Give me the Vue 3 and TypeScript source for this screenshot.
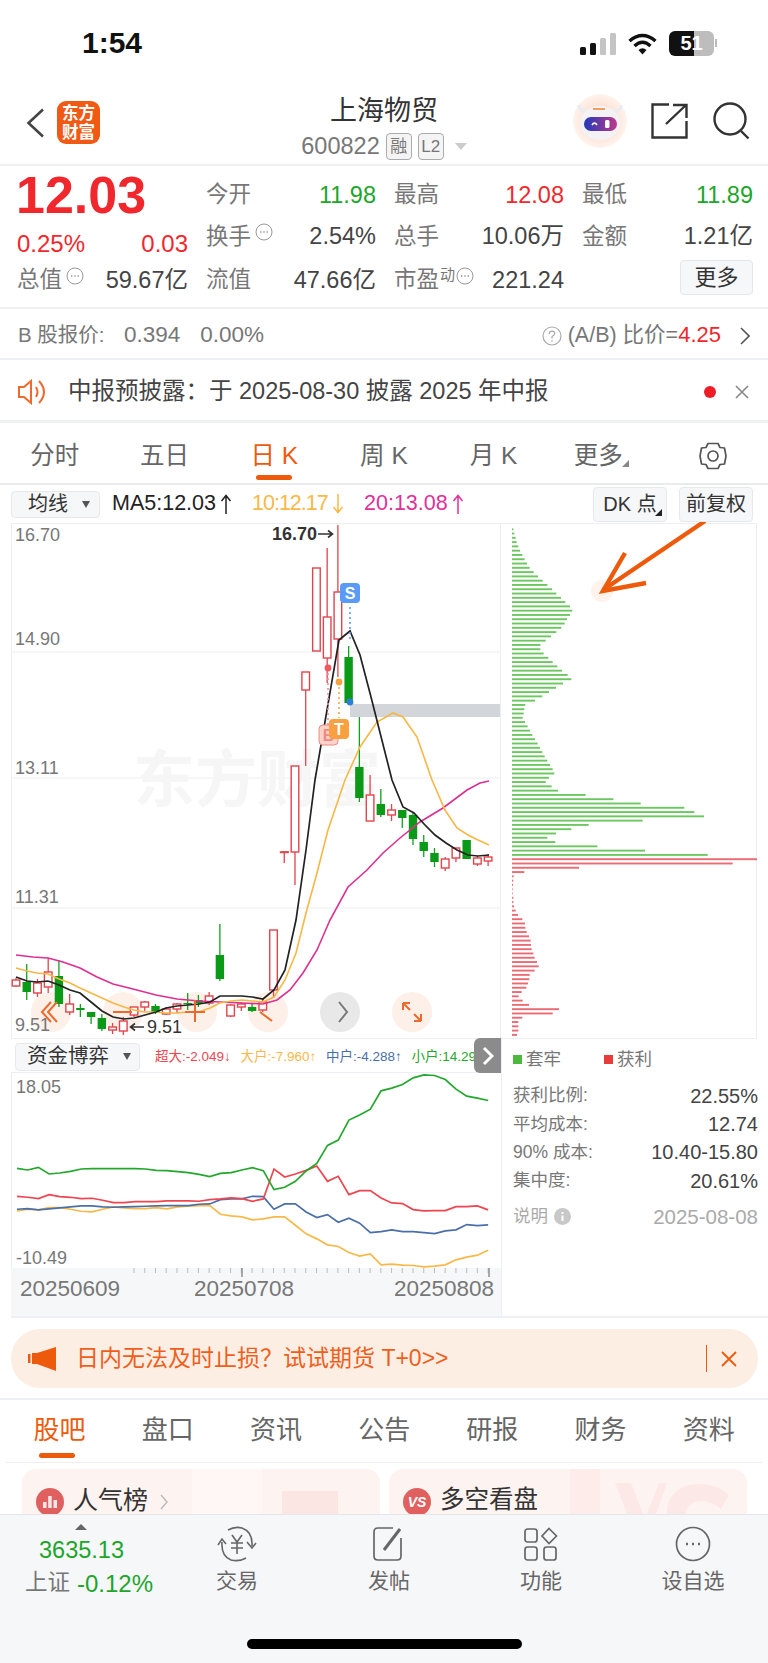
<script setup lang="ts">
interface Cell {
  label: string
  value: string
  color?: string
  info?: boolean
  sup?: string
}

const quoteRows: Cell[][] = [
  [
    { label: "今开", value: "11.98", color: "green" },
    { label: "最高", value: "12.08", color: "red" },
    { label: "最低", value: "11.89", color: "green" },
  ],
  [
    { label: "换手", value: "2.54%", info: true },
    { label: "总手", value: "10.06万" },
    { label: "金额", value: "1.21亿" },
  ],
]

const periodTabs = ["分时", "五日", "日 K", "周 K", "月 K"]
const infoTabs = ["股吧", "盘口", "资讯", "公告", "研报", "财务", "资料"]

// top, bottom, wick top, wick bottom, 1 = up (hollow red)
const candles: number[][] = [
  [980, 986, 978, 987, 1], [982, 992, 964, 1000, 0], [983, 993, 979, 997, 1], [972, 987, 958, 993, 1],
  [976, 1004, 960, 1007, 0], [1004, 1012, 994, 1015, 1], [1008, 1010, 1004, 1017, 0], [1012, 1017, 1012, 1024, 0],
  [1018, 1029, 1014, 1031, 0], [1027, 1030, 1023, 1034, 1], [1021, 1031, 1017, 1035, 1], [1007, 1015, 1007, 1017, 1],
  [1002, 1007, 1001, 1011, 1], [1006, 1012, 1004, 1014, 0], [1009, 1014, 1007, 1015, 1], [1004, 1009, 1003, 1013, 1],
  [1003, 1004, 993, 1010, 0], [1000, 1003, 995, 1007, 0], [996, 1003, 992, 1005, 1], [955, 979, 924, 981, 0],
  [1005, 1016, 1004, 1017, 1], [1004, 1007, 1002, 1011, 1], [1007, 1011, 1004, 1012, 0], [1002, 1010, 998, 1012, 1],
  [930, 990, 930, 998, 1], [852, 852.5, 852, 863, 1], [766, 852, 766, 885, 1], [672, 690, 672, 766, 1],
  [568, 651, 568, 651, 1], [617, 658, 548, 683, 1], [592, 639, 525, 677, 1], [657, 703, 646, 703, 0],
  [767, 798, 717, 802, 0], [795, 821, 775, 821, 1], [804, 815, 789, 817, 0], [810, 815, 804, 821, 1],
  [810, 818, 810, 828, 0], [815, 839, 812, 845, 0], [842, 851, 835, 857, 0], [853, 862, 848, 867, 0],
  [859, 868, 857, 871, 1], [848, 858, 848, 862, 1], [840, 859, 840, 859, 0], [858, 864, 856, 866, 1],
  [857, 861, 854, 866, 1],
]

const candleX = (i: number) => 16 + i * 10.73

const ma5 = "16,977 27,981 37,982 48,981 59,985 70,990 80,993 91,1002 102,1011 113,1017 124,1019 134,1018 145,1015 156,1012 166,1008 177,1006 188,1005 199,1004 210,1002 220,996 231,996 242,996 252,997 263,999 274,990 285,970 296,920 306,850 315,780 339,640 350,631 360,655 371,697 392,780 403,807 414,813 425,825 435,835 446,843 457,850 468,855 478,856 489,855"
const ma10 = "16,968 27,971 37,973 48,974 59,979 70,983 80,988 91,993 102,998 113,1003 124,1007 134,1010 145,1012 156,1012 166,1013 177,1013 188,1012 199,1012 210,1008 220,1003 231,1001 242,1000 252,1001 263,1002 274,997 285,980 296,953 306,913 317,873 328,830 345,780 360,747 377,722 393,713 403,717 417,737 432,780 445,810 457,828 468,835 478,840 489,845"
const ma20 = "16,955 33,957 48,958 63,962 80,968 97,977 113,984 133,989 156,995 177,999 199,1001 220,1002 242,1003 263,1004 277,1000 290,990 303,973 317,950 330,920 348,887 367,870 383,853 400,838 420,822 443,808 467,790 480,783 489,781"

// widths measured at 3x
const chipGreen = [4, 7, 11, 14, 19, 24, 31, 38, 45, 53, 65, 78, 92, 106, 120, 133, 147, 160, 174, 181, 174, 165, 158, 148, 133, 117, 101, 85, 85, 95, 109, 122, 136, 150, 167, 178, 153, 132, 111, 91, 69, 40, 37, 35, 32, 39, 47, 54, 61, 69, 77, 84, 91, 98, 106, 114, 122, 127, 111, 101, 119, 138, 221, 304, 386, 517, 547, 576, 392, 230, 178, 132, 106, 130, 256, 399, 587]
const chipRed = [735, 662, 201, 37, 5, 4, 3, 2, 2, 4, 4, 6, 11, 18, 31, 39, 40, 44, 51, 56, 57, 59, 64, 68, 75, 80, 68, 53, 52, 48, 43, 29, 20, 32, 51, 141, 122, 31, 19, 19, 19, 15]

const chipY = (i: number) => 528.3 + i * 4.285

// y values measured at 3x from y=1040
const flowLines: { color: string; ys: number[] }[] = [
  { color: "#f9b848", ys: [513, 508, 510, 503, 503, 508, 514, 516, 508, 501, 504, 506, 506, 503, 507, 501, 499, 497, 497, 523, 528, 531, 540, 537, 531, 531, 556, 582, 597, 615, 620, 638, 649, 642, 675, 673, 676, 677, 681, 679, 675, 660, 652, 646, 631] },
  { color: "#4a6fa8", ys: [508, 506, 510, 507, 504, 501, 498, 498, 501, 502, 501, 500, 499, 498, 497, 497, 497, 493, 492, 479, 477, 477, 469, 470, 508, 492, 492, 516, 533, 524, 547, 535, 550, 578, 575, 570, 575, 575, 578, 581, 573, 570, 554, 557, 555] },
  { color: "#ee4550", ys: [469, 472, 476, 464, 470, 472, 476, 475, 481, 488, 488, 485, 485, 485, 483, 483, 483, 484, 479, 477, 474, 476, 484, 477, 387, 411, 402, 391, 378, 424, 409, 464, 452, 452, 474, 489, 491, 509, 513, 512, 512, 500, 500, 498, 510] },
  { color: "#22a82c", ys: [385, 390, 382, 402, 399, 394, 387, 386, 386, 386, 386, 386, 387, 391, 392, 395, 398, 403, 410, 400, 398, 390, 383, 392, 449, 442, 424, 393, 370, 316, 300, 240, 225, 207, 152, 144, 133, 113, 104, 106, 118, 147, 168, 174, 181] },
]

function flowPoints(ys: number[]) {
  return ys.map((y, i) => `${candleX(i)},${1040 + y / 3}`).join(" ")
}

const ticks = Array.from({ length: 34 }, (_, i) => candleX(i + 11))

const stats = [
  { label: "获利比例:", value: "22.55%" },
  { label: "平均成本:", value: "12.74" },
  { label: "90% 成本:", value: "10.40-15.80" },
  { label: "集中度:", value: "20.61%" },
]
</script>

<template>
  <div class="page">
    <div class="status">
      <span class="time">1:54</span>
      <div class="status-icons">
        <svg width="36" height="22" viewBox="0 0 36 22">
          <rect x="0" y="14" width="6" height="8" rx="1.5" fill="#111" />
          <rect x="10" y="10" width="6" height="12" rx="1.5" fill="#111" />
          <rect x="20" y="5" width="6" height="17" rx="1.5" fill="#c4c4c4" />
          <rect x="30" y="0" width="6" height="22" rx="1.5" fill="#c4c4c4" />
        </svg>
        <svg width="29" height="22" viewBox="0 0 29 22" fill="none" stroke="#111" stroke-width="3.4">
          <path d="M1.5 8 Q14.5 -3 27.5 8" />
          <path d="M6.5 13 Q14.5 5.5 22.5 13" />
          <path d="M14.5 21.5 L10.5 17 Q14.5 13.5 18.5 17 Z" fill="#111" stroke="none" />
        </svg>
        <div class="battery"><span>51</span></div>
        <i class="battery-nub"></i>
      </div>
    </div>

    <div class="nav">
      <div class="nav-left">
        <svg width="19" height="30" viewBox="0 0 19 30" fill="none" stroke="#444" stroke-width="2.6"><path d="M17 1.5 L2.5 15 L17 28.5" /></svg>
        <div class="logo">东方<br />财富</div>
      </div>
      <div class="nav-center">
        <div class="stock-name">上海物贸</div>
        <div class="stock-code">
          <span>600822</span><b class="code-tag">融</b><b class="code-tag">L2</b><i class="code-arrow"></i>
        </div>
      </div>
      <div class="nav-right">
        <svg width="54" height="54" viewBox="0 0 54 54">
          <defs>
            <linearGradient id="visor" x1="0" x2="1" y1="0" y2="0">
              <stop offset="0" stop-color="#2238b8" />
              <stop offset="1" stop-color="#c0398c" />
            </linearGradient>
            <radialGradient id="halo">
              <stop offset="0.6" stop-color="#fde4d8" />
              <stop offset="1" stop-color="#fef4ee" />
            </radialGradient>
          </defs>
          <circle cx="27" cy="27" r="27" fill="url(#halo)" />
          <path d="M6 11 Q7 17 13 18 M48 11 Q47 17 41 18" fill="none" stroke="#ececf0" stroke-width="4" />
          <ellipse cx="27" cy="29" rx="20" ry="17" fill="#f3f3f6" />
          <rect x="20" y="14" width="12" height="2" fill="#f0a060" />
          <rect x="11" y="23" width="33" height="14" rx="7" fill="url(#visor)" />
          <path d="M19 31 Q21.5 27 24 31" fill="none" stroke="#fff" stroke-width="1.6" />
          <rect x="32" y="26" width="4.5" height="8" rx="1.5" fill="#fff" />
        </svg>
        <svg class="share" width="37" height="36" viewBox="0 0 37 36" fill="none" stroke="#333" stroke-width="2.4">
          <path d="M18 1.5 H1.5 V34.5 H35.5 V18" />
          <path d="M15 21 L34 3 M22 2 H35.5 V15" />
        </svg>
        <svg class="search" width="37" height="38" viewBox="0 0 37 38" fill="none" stroke="#333" stroke-width="2.4">
          <circle cx="17" cy="17" r="15.5" />
          <path d="M28 29 L35.5 36.5" />
        </svg>
      </div>
    </div>

    <div class="quote">
      <div class="price">12.03</div>
      <template v-for="(cell, c) in quoteRows[0]" :key="c">
        <div class="cell row-one">
          <span class="cell-label">{{ cell.label }}</span>
          <span :class="['cell-value', cell.color]">{{ cell.value }}</span>
        </div>
      </template>

      <div class="change"><span>0.25%</span><span>0.03</span></div>
      <template v-for="(cell, c) in quoteRows[1]" :key="c">
        <div class="cell">
          <span class="cell-label">{{ cell.label }}
            <svg v-if="cell.info" class="dots" width="18" height="18" viewBox="0 0 18 18" fill="none" stroke="#999"><circle cx="9" cy="9" r="8" /><path d="M5 9h1.4M8.3 9h1.4M11.6 9H13" stroke-width="1.4" /></svg>
          </span>
          <span class="cell-value">{{ cell.value }}</span>
        </div>
      </template>

      <div class="cell">
        <span class="cell-label">总值
          <svg class="dots" width="18" height="18" viewBox="0 0 18 18" fill="none" stroke="#999"><circle cx="9" cy="9" r="8" /><path d="M5 9h1.4M8.3 9h1.4M11.6 9H13" stroke-width="1.4" /></svg>
        </span>
        <span class="cell-value">59.67亿</span>
      </div>
      <div class="cell">
        <span class="cell-label">流值</span>
        <span class="cell-value">47.66亿</span>
      </div>
      <div class="cell">
        <span class="cell-label">市盈<sup class="sup">动</sup>
          <svg class="dots near" width="18" height="18" viewBox="0 0 18 18" fill="none" stroke="#999"><circle cx="9" cy="9" r="8" /><path d="M5 9h1.4M8.3 9h1.4M11.6 9H13" stroke-width="1.4" /></svg>
        </span>
        <span class="cell-value">221.24</span>
      </div>
      <div class="more-cell"><button class="more-btn">更多</button></div>
    </div>

    <div class="b-row">
      <span class="b-label">B 股报价:</span>
      <span class="b-num">0.394</span>
      <span class="b-num">0.00%</span>
      <div class="b-right">
        <svg width="20" height="20" viewBox="0 0 20 20" fill="none" stroke="#aaa" stroke-width="1.2"><circle cx="10" cy="10" r="9" /><path d="M7.2 8 Q7.4 5.2 10 5.2 Q12.8 5.2 12.8 7.6 Q12.8 9.2 10 10.6 V12.4" /><path d="M10 14v1.4" /></svg>
        <span>(A/B) 比价=<em>4.25</em></span>
        <svg class="b-chevron" width="10" height="18" viewBox="0 0 10 18" fill="none" stroke="#555" stroke-width="1.6"><path d="M1 1 L9 9 L1 17" /></svg>
      </div>
    </div>

    <div class="notice">
      <svg width="30" height="26" viewBox="0 0 30 26" fill="none" stroke="#ee6a2c" stroke-width="2">
        <path d="M1 8 H6 L13 2 V24 L6 18 H1 Z" />
        <path d="M18 8 Q21 13 18 18" />
        <path d="M21 2 Q31 13 21 24" />
      </svg>
      <span class="notice-text">中报预披露：于 2025-08-30 披露 2025 年中报</span>
      <i class="notice-dot"></i>
      <svg width="14" height="14" viewBox="0 0 14 14" stroke="#888" stroke-width="1.6"><path d="M1 1 L13 13 M13 1 L1 13" /></svg>
    </div>

    <div class="period-tabs">
      <div v-for="(t, i) in periodTabs" :key="t" :class="['period-tab', { on: i === 2 }]">{{ t }}</div>
      <div class="period-tab tab-more">更多<i class="corner"></i></div>
      <div class="period-tab">
        <svg width="28" height="30" viewBox="0 0 28 30" fill="none" stroke="#555" stroke-width="1.7">
          <path d="M9 2.5 H19 L21 6.5 L25.5 7 L27 15 L25.5 23 L21 23.5 L19 27.5 H9 L7 23.5 L2.5 23 L1 15 L2.5 7 L7 6.5 Z" stroke-linejoin="round" />
          <circle cx="14" cy="15" r="5" />
        </svg>
      </div>
    </div>

    <div class="ma-row">
      <div class="select ma-select"><span>均线</span><i class="select-arrow"></i></div>
      <span class="ma-item ma5">MA5:12.03
        <svg width="12" height="20" viewBox="0 0 12 20" fill="none" stroke="currentColor" stroke-width="1.5"><path d="M6 20V1.5M1.5 7 L6 1.5 L10.5 7" /></svg>
      </span>
      <span class="ma-item ma10"><span class="tight">10:12.17</span>
        <svg width="12" height="20" viewBox="0 0 12 20" fill="none" stroke="currentColor" stroke-width="1.5"><path d="M6 0V18.5M1.5 13 L6 18.5 L10.5 13" /></svg>
      </span>
      <span class="ma-item ma20">20:13.08
        <svg width="12" height="20" viewBox="0 0 12 20" fill="none" stroke="currentColor" stroke-width="1.5"><path d="M6 20V1.5M1.5 7 L6 1.5 L10.5 7" /></svg>
      </span>
      <div class="ma-btn dk">DK 点<i class="corner dark"></i></div>
      <div class="ma-btn fq">前复权</div>
    </div>

    <div class="chart-row">
      <svg class="kline" width="490" height="516" viewBox="11 523 490 516">
        <line x1="11" x2="501" y1="652" y2="652" stroke="#eceef3" />
        <line x1="11" x2="501" y1="778" y2="778" stroke="#eceef3" />
        <line x1="11" x2="501" y1="908" y2="908" stroke="#eceef3" />
        <text x="133" y="802" class="watermark">东方财富</text>
        <rect x="350" y="704" width="151" height="13" fill="#d2d5d9" />

        <g v-for="r in [51, 123, 197, 268, 412]" :key="r">
          <circle :cx="r" cy="1012" r="20" fill="#fdf0e8" />
        </g>
        <circle cx="340" cy="1012" r="20" fill="#e8e8e8" />

        <text x="15" y="541" class="axis">16.70</text>
        <text x="15" y="645" class="axis">14.90</text>
        <text x="15" y="774" class="axis">13.11</text>
        <text x="15" y="903" class="axis">11.31</text>
        <text x="15" y="1031" class="axis">9.51</text>

        <g v-for="(c, i) in candles" :key="i">
          <line :x1="candleX(i)" :x2="candleX(i)" :y1="c[2]" :y2="c[3]" :stroke="c[4] ? '#e2444c' : '#12a01f'" stroke-width="1.3" />
          <rect v-if="c[4]" :x="candleX(i) - 3.8" :y="c[0]" width="7.6" :height="Math.max(c[1] - c[0], 0.5)" fill="#fff" stroke="#e2444c" stroke-width="1.4" />
          <rect v-else :x="candleX(i) - 4.2" :y="c[0]" width="8.4" :height="c[1] - c[0]" fill="#0a9a17" />
        </g>
        <line x1="281" x2="289" y1="852" y2="852" stroke="#e2444c" stroke-width="1.5" />

        <polyline :points="ma20" fill="none" stroke="#dd2f92" stroke-width="1.6" />
        <polyline :points="ma10" fill="none" stroke="#f8b745" stroke-width="1.6" />
        <polyline :points="ma5" fill="none" stroke="#222" stroke-width="1.7" />

        <!-- buy / sell marks -->
        <line x1="350" x2="350" y1="607" y2="640" stroke="#5b9bf8" stroke-width="1.6" stroke-dasharray="2 3" />
        <circle cx="350" cy="702" r="3.4" fill="#2d7fd8" />
        <rect x="340" y="583" width="20" height="20" rx="4" fill="#5a9bf8" />
        <text x="350" y="599" class="mark">S</text>
        <line x1="328" x2="328" y1="668" y2="725" stroke="#f58c90" stroke-width="1.6" stroke-dasharray="2 3" />
        <circle cx="328" cy="668" r="3.4" fill="#f0585e" />
        <line x1="339" x2="339" y1="682" y2="718" stroke="#f9a948" stroke-width="1.6" stroke-dasharray="2 3" />
        <circle cx="339" cy="682" r="3.4" fill="#f9a040" />
        <rect x="319" y="725" width="19" height="20" rx="4" fill="#fbd3cb" stroke="#f18a82" />
        <text x="328.5" y="741" class="mark mark-b">B</text>
        <rect x="329" y="719" width="20" height="20" rx="4" fill="#f9a040" />
        <text x="339" y="735" class="mark">T</text>

        <text x="272" y="540" class="peak">16.70</text>
        <path d="M318 534 H332 M328 530.5 L332.5 534 L328 537.5" fill="none" stroke="#333" stroke-width="1.6" />
        <path d="M144 1027 H131 M135 1023.5 L130.5 1027 L135 1030.5" fill="none" stroke="#333" stroke-width="1.6" />
        <text x="147" y="1033" class="low">9.51</text>

        <!-- floating controls -->
        <path d="M51 1002 L42 1012 L51 1022 M57 1002 L48 1012 L57 1022" fill="none" stroke="#ee6a2c" stroke-width="2" />
        <path d="M113 1012 H132" fill="none" stroke="#ee6a2c" stroke-width="2" />
        <path d="M185 1012 H205 M195 1000 V1022" fill="none" stroke="#ee6a2c" stroke-width="2" />
        <path d="M272 1021 L260 1012" fill="none" stroke="#ee6a2c" stroke-width="2" />
        <path d="M344 1002 L352 1012 L344 1022" transform="translate(-5 0)" fill="none" stroke="#777" stroke-width="2" />
        <path d="M403 1003 H410 M403 1003 V1010 M403 1003 L410 1010 M421 1021 H414 M421 1021 V1014 M421 1021 L414 1014" fill="none" stroke="#ee6a2c" stroke-width="2" />
      </svg>

      <svg class="chips" width="256" height="516" viewBox="501 523 256 516">
        <rect v-for="(w, i) in chipGreen" :key="'g' + i" x="512" :y="chipY(i)" :width="w / 3" height="1.9" fill="#6cc760" />
        <rect v-for="(w, i) in chipRed" :key="'r' + i" x="512" :y="chipY(i + chipGreen.length)" :width="w / 3" height="1.9" fill="#ec6a73" />
        <circle cx="602" cy="591" r="11" fill="#fff3ec" />
        <g fill="none" stroke="#ee5a0c" stroke-width="4.4">
          <path d="M705 521 L603 590" />
          <path d="M625 553 L603 591 L646 583" />
        </g>
      </svg>
    </div>

    <div class="flow-row">
      <div class="flow-left">
        <div class="flow-head">
          <div class="select flow-select"><span>资金博弈</span><i class="select-arrow"></i></div>
          <div class="legend">
            <span class="lg-red">超大:-2.049↓</span>
            <span class="lg-orange">大户:-7.960↑</span>
            <span class="lg-blue">中户:-4.288↑</span>
            <span class="lg-green">小户:14.297↑</span>
          </div>
          <div class="fold-tab">
            <svg width="12" height="20" viewBox="0 0 12 20" fill="none" stroke="#fff" stroke-width="3"><path d="M2 2 L10 10 L2 18" /></svg>
          </div>
        </div>
        <svg class="flow-chart" width="490" height="195" viewBox="11 1073 490 195">
          <text x="15" y="1092.5" class="axis">18.05</text>
          <text x="15" y="1264" class="axis">-10.49</text>
          <polyline v-for="l in flowLines" :key="l.color" :points="flowPoints(l.ys)" fill="none" :stroke="l.color" stroke-width="1.7" />
        </svg>
        <div class="dates">
          <svg class="date-ticks" width="490" height="9" viewBox="11 1268 490 9">
            <line v-for="t in ticks" :key="t" :x1="t" :x2="t" y1="1268" y2="1273" stroke="#bbb" />
            <line x1="242" x2="242" y1="1268" y2="1277" stroke="#888" stroke-width="1.4" />
            <line x1="489" x2="489" y1="1268" y2="1277" stroke="#888" stroke-width="1.4" />
          </svg>
          <div class="date-labels"><span class="date-a">20250609</span><span class="date-b">20250708</span><span>20250808</span></div>
        </div>
      </div>
      <div class="flow-right">
        <div class="chip-legend">
          <i class="sq green-sq"></i><span class="chip-a">套牢</span>
          <i class="sq red-sq"></i><span>获利</span>
        </div>
        <div v-for="s in stats" :key="s.label" class="stat">
          <span>{{ s.label }}</span><b>{{ s.value }}</b>
        </div>
        <div class="stat note">
          <span class="note-left">说明
            <svg width="17" height="17" viewBox="0 0 17 17"><circle cx="8.5" cy="8.5" r="8.5" fill="#c8c8c8" /><path d="M8.5 7.4V13M8.5 4v1.8" stroke="#fff" stroke-width="2" /></svg>
          </span>
          <span class="note-date">2025-08-08</span>
        </div>
      </div>
    </div>

    <div class="banner-wrap">
      <div class="banner">
        <svg width="28" height="24" viewBox="0 0 28 24" fill="#ee5a0c">
          <rect x="0" y="7" width="2.5" height="9" />
          <rect x="4" y="6" width="5" height="11" />
          <path d="M9 6 L28 0 V24 L9 17 Z" />
        </svg>
        <span class="banner-text">日内无法及时止损？试试期货 T+0&gt;&gt;</span>
        <i class="banner-line"></i>
        <svg width="16" height="16" viewBox="0 0 16 16" stroke="#ee5a0c" stroke-width="1.8"><path d="M1 1 L15 15 M15 1 L1 15" /></svg>
      </div>
    </div>

    <div class="info-tabs">
      <div v-for="(t, i) in infoTabs" :key="t" :class="['info-tab', { on: i === 0 }]">{{ t }}</div>
    </div>

    <div class="cards">
      <div class="card">
        <svg class="card-bg" width="358" height="60" viewBox="0 0 358 60">
          <rect x="170" width="70" height="60" fill="#fff" fill-opacity=".35" />
          <rect x="260" y="22" width="56" height="38" fill="#fce6e4" />
        </svg>
        <svg class="card-icon" width="28" height="28" viewBox="0 0 28 28">
          <circle cx="14" cy="14" r="14" fill="#e0605f" />
          <path d="M7 20V14h3.5v6M12.2 20V8h3.5v12M17.5 20v-8H21v8" fill="#fff" fill-opacity=".85" />
        </svg>
        <span class="card-title big">人气榜</span>
        <svg class="card-chevron" width="8" height="16" viewBox="0 0 8 16" fill="none" stroke="#bbb" stroke-width="1.4"><path d="M1 1 L7 8 L1 15" /></svg>
      </div>
      <div class="card">
        <svg class="card-bg" width="358" height="60" viewBox="0 0 358 60">
          <rect x="181" width="30" height="60" fill="#fdecea" />
          <path d="M226 14 H242 L256 50 L270 14 H278 L262 60 H244 Z" fill="#fce9e7" />
          <path d="M340 26 Q325 12 300 16 Q278 22 278 44 V60 H296 V46 Q298 32 314 32 Q326 34 332 40 Z" fill="#fce9e7" />
        </svg>
        <svg class="card-icon" width="28" height="28" viewBox="0 0 28 28">
          <circle cx="14" cy="14" r="14" fill="#e0605f" />
          <text x="14" y="19" class="vs">VS</text>
        </svg>
        <span class="card-title">多空看盘</span>
      </div>
    </div>

    <div class="bottom">
      <div class="index-box">
        <i class="index-arrow"></i>
        <div class="index-num">3635.13</div>
        <div class="index-line"><span>上证</span><em>-0.12%</em></div>
      </div>
      <div class="bottom-item">
        <svg width="40" height="36" viewBox="0 0 40 36" fill="none" stroke="#666" stroke-width="1.6">
          <path d="M11 4 Q18 0 25 2 Q36 6 35 20" />
          <path d="M30 16 L35 22 L39 17" />
          <path d="M29 32 Q22 36 14 34 Q4 30 5 16" />
          <path d="M1 19 L5 13 L9 18" />
          <path d="M15 9 L20 16 L25 9 M14 17 H26 M14 22 H26 M20 16 V28" />
        </svg>
        <span>交易</span>
      </div>
      <div class="bottom-item">
        <svg width="36" height="36" viewBox="0 0 36 36" fill="none" stroke="#666" stroke-width="1.7">
          <path d="M22 2 H7 Q3 2 3 6 V30 Q3 34 7 34 H26 Q30 34 30 30 V12" />
          <path d="M13 24 L29 3" stroke-width="3" />
        </svg>
        <span>发帖</span>
      </div>
      <div class="bottom-item">
        <svg width="34" height="34" viewBox="0 0 34 34" fill="none" stroke="#666" stroke-width="1.7">
          <rect x="1" y="2" width="12" height="13" rx="2.5" />
          <path d="M25 1.5 L32.5 9 L25 16.5 L18 9 Z" />
          <rect x="1" y="20" width="12" height="13" rx="2.5" />
          <rect x="20" y="20" width="12" height="13" rx="2.5" />
        </svg>
        <span>功能</span>
      </div>
      <div class="bottom-item">
        <svg width="36" height="36" viewBox="0 0 36 36" fill="none" stroke="#666" stroke-width="1.7">
          <circle cx="18" cy="18" r="16.5" />
          <path d="M11 18h2M17 18h2M23 18h2" stroke-width="2.4" />
        </svg>
        <span>设自选</span>
      </div>
    </div>
    <div class="home-bar"></div>
  </div>
</template>

<style>
html,
body {
  margin: 0;
  background: #fff;
}
</style>

<style scoped>
.page {
  position: relative;
  width: 768px;
  height: 1663px;
  overflow: hidden;
  background: #fff;
  font-family: "Liberation Sans", "Noto Sans CJK SC", sans-serif;
  line-height: 1;
  color: #444;
}

i,
em {
  font-style: normal;
}

.status {
  height: 78px;
  display: flex;
  justify-content: space-between;
  padding: 28px 51px 0 82px;
  box-sizing: border-box;
}

.time {
  font-size: 30px;
  font-weight: 700;
  color: #111;
  line-height: 30px;
}

.status-icons {
  display: flex;
  align-items: flex-start;
  margin-top: 5px;
  gap: 12px;
}

.battery {
  width: 45px;
  height: 25px;
  margin-top: -2px;
  border-radius: 6px;
  background: linear-gradient(90deg, #111 55%, #bdbdbd 55%);
  font-size: 20px;
  font-weight: 700;
  color: #fff;
  text-align: center;
  line-height: 25px;
}

.battery-nub {
  width: 2px;
  height: 8px;
  margin: 6px 0 0 -11px;
  background: #bbb;
}

.nav {
  height: 86px;
  display: grid;
  grid-template-columns: 1fr auto 1fr;
  align-items: center;
  padding: 0 18px 0 26px;
  border-bottom: 2px solid #eef0f3;
}

.nav-left {
  display: flex;
  align-items: center;
  gap: 12px;
  margin-top: 3px;
}

.logo {
  width: 43px;
  height: 43px;
  box-sizing: border-box;
  padding-top: 3px;
  border-radius: 9px;
  background: #f05a14;
  color: #fff;
  font-size: 16.5px;
  line-height: 19px;
  font-weight: 700;
  text-align: center;
}

.nav-center {
  align-self: start;
  text-align: center;
  margin: 20px 0 0 -8px;
}

.stock-name {
  font-size: 27px;
  color: #333;
}

.stock-code {
  margin-top: 8px;
  display: flex;
  align-items: center;
  font-size: 23.5px;
  color: #777;
}

.code-tag {
  margin-left: 6px;
  height: 25px;
  min-width: 22px;
  padding: 0 1px;
  border: 1px solid #aaa;
  border-radius: 4px;
  font-size: 17px;
  font-weight: 400;
  line-height: 25px;
  background: #f4f4f4;
}

.code-arrow {
  margin-left: 11px;
  border-left: 6px solid transparent;
  border-right: 6px solid transparent;
  border-top: 7px solid #ccc;
}

.nav-right {
  display: flex;
  justify-content: flex-end;
  align-items: center;
}

.share {
  margin-left: 24px;
}

.search {
  margin-left: 25px;
}

.quote {
  height: 143px;
  box-sizing: border-box;
  padding: 6px 15px 0 17px;
  display: grid;
  grid-template-columns: 171px 170px 170px 171px;
  grid-template-rows: 43px 44px 43px;
  column-gap: 18px;
  align-items: center;
  font-size: 22.5px;
  border-bottom: 2px solid #eef0f3;
}

.price {
  font-size: 52px;
  font-weight: 700;
  color: #f0282d;
  margin: 3px 0 0 -1px;
}

.change {
  display: flex;
  justify-content: space-between;
  color: #f0282d;
  font-size: 24px;
  margin-top: 13px;
}

.cell {
  display: flex;
  justify-content: space-between;
  align-items: center;
}

.row-one {
  margin-top: 4px;
}

.cell-label {
  color: #777;
  display: flex;
  align-items: center;
}

.cell-value {
  font-size: 23.5px;
}

.cell-value.green {
  color: #1ca62a;
}

.cell-value.red {
  color: #f0282d;
}

.dots {
  margin: -10px 0 0 4px;
}

.dots.near {
  margin-left: 1px;
}

.sup {
  font-size: 15px;
  margin: -12px 0 0 1px;
  vertical-align: baseline;
}

.more-cell {
  display: flex;
  justify-content: flex-end;
}

.more-btn {
  width: 73px;
  height: 35px;
  padding: 0;
  background: #f6f7f9;
  border: 1px solid #e4e6ea;
  border-radius: 4px;
  font: inherit;
  font-size: 22px;
  color: #333;
  margin-top: -6px;
}

.b-row {
  height: 49px;
  box-sizing: content-box;
  display: flex;
  align-items: center;
  padding: 0 18px 0 18px;
  font-size: 20.5px;
  color: #777;
  border-bottom: 2px solid #eef0f3;
}

.b-label,
.b-num,
.b-right {
  margin-top: 4px;
}

.b-num {
  font-size: 22.5px;
}

.b-label {
  width: 106px;
  white-space: nowrap;
}

.b-num + .b-num {
  margin-left: 20px;
}

.b-right {
  margin-left: auto;
  display: flex;
  align-items: center;
  font-size: 21.5px;
}

.b-right span {
  margin-left: 6px;
}

.b-right em {
  color: #f0282d;
  font-size: 22px;
}

.b-chevron {
  margin-left: 19px;
}

.notice {
  height: 60px;
  box-sizing: border-box;
  height: 63px;
  display: flex;
  align-items: center;
  padding: 4px 19px 0 18px;
  border-bottom: 3px solid #f0f1f4;
}

.notice-text {
  margin-left: 20px;
  font-size: 23.5px;
  color: #444;
}

.notice-dot {
  margin-left: auto;
  width: 12px;
  height: 12px;
  border-radius: 50%;
  background: #ee1c25;
  margin-right: 19px;
}

.period-tabs {
  height: 60px;
  display: grid;
  grid-template-columns: repeat(7, 109.7px);
  align-items: center;
  border-bottom: 2px solid #e9ebef;
}

.period-tab {
  position: relative;
  height: 60px;
  display: flex;
  align-items: center;
  justify-content: center;
  padding-top: 6px;
  box-sizing: border-box;
  font-size: 24.5px;
  color: #666;
}

.tab-more {
  padding-right: 10px;
}

.period-tab.on {
  color: #ee5a0c;
}

.period-tab.on::after {
  content: "";
  position: absolute;
  left: 37px;
  bottom: 3px;
  width: 36px;
  height: 5px;
  border-radius: 3px;
  background: #ee5a0c;
}

.corner {
  position: absolute;
  right: 29px;
  bottom: 16px;
  border-left: 7px solid transparent;
  border-bottom: 7px solid #888;
}

.corner.dark {
  right: 4px;
  bottom: 5px;
  border-bottom-color: #222;
}

.ma-row {
  height: 38px;
  display: flex;
  align-items: center;
  padding: 0 15px 0 11px;
}

.select {
  box-sizing: border-box;
  display: flex;
  align-items: center;
  background: #f6f7f9;
  border: 1px solid #e6e8ec;
  border-radius: 4px;
  color: #333;
}

.ma-select {
  width: 89px;
  height: 27px;
  padding: 0 9px 0 16px;
  font-size: 20px;
  justify-content: space-between;
}

.select-arrow {
  border-left: 4px solid transparent;
  border-right: 4px solid transparent;
  border-top: 7px solid #555;
}

.ma-item {
  display: flex;
  align-items: center;
  gap: 4px;
  font-size: 21.5px;
}

.ma5 {
  margin-left: 12px;
  width: 140px;
  color: #222;
}

.ma10 {
  width: 112px;
  color: #f9b848;
}

.tight {
  letter-spacing: -1px;
}

.ma20 {
  color: #e0309a;
}

.ma-btn {
  position: relative;
  box-sizing: border-box;
  height: 35px;
  display: flex;
  align-items: center;
  justify-content: center;
  background: #f6f7f9;
  border: 1px solid #e6e8ec;
  border-radius: 4px;
  font-size: 20px;
  color: #333;
}

.dk {
  width: 74px;
  margin-left: auto;
}

.fq {
  width: 74px;
  margin-left: 12px;
}

.chart-row {
  width: 746px;
  height: 516px;
  margin-left: 11px;
  display: flex;
  box-shadow: inset 0 0 0 1px #eceef3;
}

.kline,
.chips,
.flow-chart {
  display: block;
}

.chips {
  overflow: visible;
  border-left: 1px solid #eceef3;
  margin-left: -1px;
}

.axis {
  font-size: 18px;
  fill: #777;
}

.watermark {
  font-size: 62px;
  font-weight: 700;
  fill: #f6f6f6;
}

.mark {
  font-size: 16px;
  font-weight: 700;
  fill: #fff;
  text-anchor: middle;
}

.mark-b {
  fill: #f08a84;
}

.peak {
  font-size: 18px;
  font-weight: 700;
  fill: #333;
}

.low {
  font-size: 18px;
  fill: #333;
}

.flow-row {
  height: 277px;
  display: flex;
  border-bottom: 2px solid #eef0f3;
  margin-left: 11px;
}

.flow-left {
  width: 490px;
}

.flow-head {
  height: 34px;
  position: relative;
  display: flex;
  align-items: center;
  border-bottom: 1px solid #eceef3;
  box-sizing: border-box;
}

.flow-select {
  width: 125px;
  height: 28px;
  margin: 2px 0 0 4px;
  padding: 0 8px 0 11px;
  font-size: 20.5px;
  justify-content: space-between;
}

.legend {
  margin: 2px 0 0 15px;
  display: flex;
  font-size: 13.5px;
  white-space: nowrap;
}

.legend span {
  width: 85.5px;
}

.lg-red {
  color: #ee4550;
}

.lg-orange {
  color: #f9b848;
}

.lg-blue {
  color: #4a6fa8;
}

.lg-green {
  color: #22a82c;
}

.fold-tab {
  position: absolute;
  right: 0;
  top: -1px;
  width: 27px;
  height: 35px;
  border-radius: 6px 0 0 6px;
  background: #8b8b8b;
  display: flex;
  align-items: center;
  justify-content: center;
}

.flow-chart {
  border-left: 1px solid #eceef3;
  box-sizing: border-box;
}

.dates {
  height: 48px;
  background: #f6f7f9;
}

.date-ticks {
  display: block;
}

.date-labels {
  display: flex;
  padding: 1px 0 0 9px;
  font-size: 22.5px;
  color: #777;
}

.date-a {
  width: 174px;
}

.date-b {
  width: 200px;
}

.flow-right {
  width: 245px;
  padding: 12px 0 0 11px;
  border-left: 1px solid #eceef3;
  font-size: 17.5px;
}

.chip-legend {
  display: flex;
  align-items: center;
  font-size: 17.5px;
  color: #777;
  height: 17px;
  margin-bottom: 14px;
}

.sq {
  width: 9px;
  height: 9px;
  margin-right: 4px;
}

.green-sq {
  background: #4cb83c;
}

.red-sq {
  background: #e83c3c;
}

.chip-a {
  width: 78px;
}

.stat {
  height: 28.2px;
  display: flex;
  align-items: center;
  justify-content: space-between;
  color: #777;
}

.stat b {
  font-size: 20px;
  font-weight: 400;
  color: #444;
}

.stat.note {
  margin-top: 8px;
  color: #aaa;
}

.note-date {
  font-size: 20.5px;
}

.note-left {
  display: flex;
  align-items: center;
  gap: 6px;
}

.banner-wrap {
  height: 82px;
  box-sizing: border-box;
  padding: 11px 10px 0 11px;
  border-bottom: 2px solid #eef0f3;
}

.banner {
  height: 59px;
  display: flex;
  align-items: center;
  padding: 0 21px 0 17px;
  border-radius: 29px;
  background: #fdeee4;
}

.banner-text {
  margin-left: 20px;
  font-size: 23px;
  color: #ef5f1c;
}

.banner-line {
  margin-left: auto;
  margin-right: 14px;
  width: 1px;
  height: 27px;
  background: #ee5a0c;
}

.info-tabs {
  height: 62px;
  display: grid;
  grid-template-columns: repeat(7, 108.2px);
  padding-left: 3px;
  margin-left: 5px;
  margin-right: 5px;
  border-bottom: 1px solid #eef0f3;
}

.info-tab {
  position: relative;
  display: flex;
  align-items: center;
  justify-content: center;
  height: 62px;
  margin-left: -5px;
  padding-bottom: 2px;
  box-sizing: border-box;
  font-size: 26px;
  color: #666;
}

.info-tab.on {
  color: #ee5a0c;
}

.info-tab.on::after {
  content: "";
  position: absolute;
  left: 36px;
  bottom: 4px;
  width: 36px;
  height: 5px;
  border-radius: 3px;
  background: #ee5a0c;
}

.cards {
  height: 51px;
  padding: 6px 21px 0 22px;
  display: grid;
  grid-template-columns: 358px 358px;
  column-gap: 9px;
  box-sizing: border-box;
  overflow: hidden;
}

.card {
  position: relative;
  overflow: hidden;
  height: 60px;
  padding: 19px 0 0 14px;
  box-sizing: border-box;
  display: flex;
  align-items: flex-start;
  border-radius: 14px;
  background: #fdf3f0;
}

.card-bg {
  position: absolute;
  left: 0;
  top: 0;
}

.card-icon,
.card-title,
.card-chevron {
  position: relative;
}

.card-title {
  margin-left: 9px;
  font-size: 24.5px;
  color: #333;
}

.card-title.big {
  font-size: 25px;
}

.card-chevron {
  margin: 6px 0 0 12px;
}

.vs {
  font-size: 14px;
  font-weight: 700;
  fill: #fff;
  text-anchor: middle;
  font-style: italic;
}

.bottom {
  position: absolute;
  left: 0;
  right: 0;
  top: 1514px;
  bottom: 0;
  display: grid;
  grid-template-columns: 161px repeat(4, 152px);
  background: #f6f7f9;
  border-top: 1px solid #e4e6ea;
  box-sizing: border-box;
}

.index-box {
  position: relative;
  padding: 24px 0 0 25px;
  box-sizing: border-box;
}

.index-arrow {
  position: absolute;
  left: 75px;
  top: 9px;
  border-left: 6px solid transparent;
  border-right: 6px solid transparent;
  border-bottom: 6px solid #666;
}

.index-num {
  margin-left: 14px;
  font-size: 23.5px;
  color: #1ca62a;
}

.index-line {
  margin-top: 9px;
  display: flex;
  align-items: center;
  font-size: 24px;
  color: #777;
  white-space: nowrap;
}

.index-line span {
  font-size: 22.5px;
}

.index-line em {
  margin-left: 7px;
  color: #1ca62a;
}

.bottom-item {
  display: flex;
  flex-direction: column;
  align-items: center;
  padding-top: 11px;
  font-size: 21px;
  color: #666;
}

.bottom-item svg {
  height: 36px;
}

.bottom-item span {
  margin-top: 8px;
}

.home-bar {
  position: absolute;
  left: 247px;
  top: 1639px;
  width: 275px;
  height: 10px;
  border-radius: 5px;
  background: #000;
}
</style>
